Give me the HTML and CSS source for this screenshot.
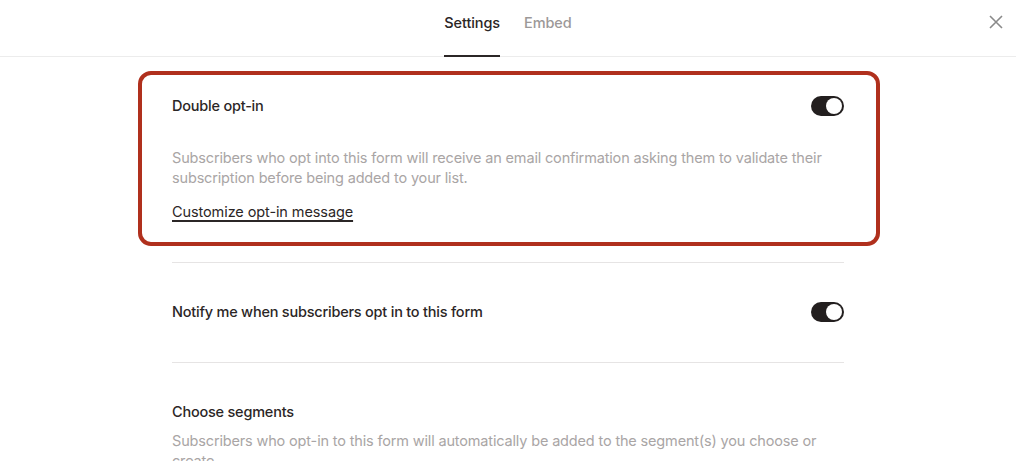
FILE: index.html
```html
<!DOCTYPE html>
<html>
<head>
<meta charset="utf-8">
<link rel="stylesheet" href="styles.css">
</head>
<body>
<div class="page">
  <header class="topbar">
    <nav class="tabs">
      <a class="tab active">Settings</a>
      <a class="tab">Embed</a>
    </nav>
    <button class="close" aria-label="Close">
      <svg width="14" height="14" viewBox="0 0 14 14"><path d="M1 1L13 13M13 1L1 13" stroke="#8a8a8a" stroke-width="1.6" fill="none"/></svg>
    </button>
  </header>
  <main class="content">
    <section class="setting first">
      <div class="row">
        <h3 class="title">Double opt-in</h3>
        <span class="toggle on"><span class="knob"></span></span>
      </div>
      <p class="desc">Subscribers who opt into this form will receive an email confirmation asking them to validate their subscription before being added to your list.</p>
      <a class="link">Customize opt-in message</a>
      <div class="highlight"></div>
    </section>
    <section class="setting">
      <div class="row">
        <h3 class="title">Notify me when subscribers opt in to this form</h3>
        <span class="toggle on"><span class="knob"></span></span>
      </div>
    </section>
    <section class="setting last">
      <h3 class="title">Choose segments</h3>
      <p class="desc">Subscribers who opt-in to this form will automatically be added to the segment(s) you choose or create.</p>
    </section>
  </main>
</div>
</body>
</html>
```
FILE: styles.css
```css
* { box-sizing: border-box; }
html, body { margin: 0; padding: 0; background: #fff; }
body {
  font-family: Inter, "Noto Sans", sans-serif;
  color: #2b2626;
  overflow: hidden;
  height: 461px;
}
.page { width: 1016px; }
.topbar {
  position: relative;
  height: 57px;
  border-bottom: 1px solid #ececec;
  display: flex;
  justify-content: center;
}
.tabs { display: flex; gap: 24px; height: 100%; }
.tab {
  display: flex;
  align-items: center;
  padding-bottom: 11px;
  font-size: 14.5px;
  font-weight: 500;
  letter-spacing: -0.1px;
  color: #9c9898;
  border-bottom: 2px solid transparent;
  margin-bottom: -1px;
  cursor: pointer;
}
.tab.active { color: #2b2626; border-bottom-color: #2b2626; }
.close {
  position: absolute;
  right: 13px;
  top: 15px;
  background: none;
  border: 0;
  padding: 0;
  width: 14px;
  height: 14px;
  display: flex;
}
.content {
  width: 672px;
  margin: 0 auto;
}
.setting {
  position: relative;
  border-bottom: 1px solid #e6e4e4;
  padding: 39px 0 40px;
}
.setting.last { border-bottom: 0; }
.row {
  display: flex;
  align-items: center;
  justify-content: space-between;
}
.title {
  margin: 0;
  font-size: 14.5px;
  font-weight: 500;
  letter-spacing: -0.22px;
  line-height: 20px;
}
.desc {
  margin: 32px 0 0;
  font-size: 14.5px;
  line-height: 20px;
  letter-spacing: -0.16px;
  color: #a9a5a5;
}
.last .desc { margin-top: 9px; }
.link {
  display: inline-block;
  margin-top: 14px;
  font-size: 14.5px;
  line-height: 20px;
  letter-spacing: -0.1px;
  color: #2b2626;
  text-decoration: underline;
  text-decoration-thickness: 1.5px;
  text-underline-offset: 3px;
}
.toggle {
  width: 33px;
  height: 20px;
  border-radius: 10px;
  background: #231f1f;
  display: flex;
  align-items: center;
  padding: 2px;
  justify-content: flex-end;
}
.knob {
  width: 16px;
  height: 16px;
  border-radius: 50%;
  background: #fff;
}
.highlight {
  position: absolute;
  left: -34px;
  right: -36px;
  top: 14px;
  bottom: 16px;
  border: 4px solid #b0301d;
  border-radius: 13px;
  pointer-events: none;
}
```
